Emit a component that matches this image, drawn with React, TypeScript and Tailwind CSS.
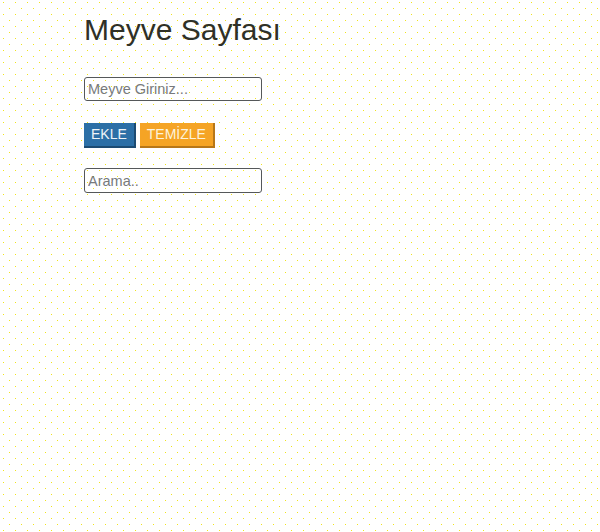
import { useState } from "react";

export default function App() {
  const [fruit, setFruit] = useState("");
  const [query, setQuery] = useState("");

  return (
    <div className="min-h-screen w-full bg-white bg-[radial-gradient(circle_at_3.5px_2.5px,#f2e41c_0.9px,transparent_0.9px),radial-gradient(circle_at_9.5px_8.5px,#f2e41c_0.9px,transparent_0.9px)] bg-[length:12px_12px] font-['Liberation_Sans',Arial,sans-serif]">
      <div className="pl-[84px] pt-[13px]">
        <h1 className="text-[30px] leading-[34px] font-normal text-[#2f3127]">
          Meyve Sayfası
        </h1>

        <input
          value={fruit}
          onChange={(e) => setFruit(e.target.value)}
          placeholder="Meyve Giriniz..."
          className="mt-[30px] block h-[24px] w-[178px] rounded-[3px] border border-[#55585a] bg-transparent px-[3px] text-[14.5px] text-[#333] placeholder:text-[#777a7d] outline-none"
        />

        <div className="mt-[22px] flex gap-[4px]">
          <button className="h-[25px] bg-[#2c6fa6] px-[7px] text-[14px] text-[#eef4f8] border-r-2 border-b-2 border-[#1c4b72]">
            EKLE
          </button>
          <button className="h-[25px] bg-[#f5a425] px-[7px] text-[14px] text-[#fdf3dc] border-r-2 border-b-2 border-[#b77718]">
            TEMİZLE
          </button>
        </div>

        <input
          value={query}
          onChange={(e) => setQuery(e.target.value)}
          placeholder="Arama.."
          className="mt-[20px] block h-[25px] w-[178px] rounded-[3px] border border-[#55585a] bg-transparent px-[3px] text-[14.5px] text-[#333] placeholder:text-[#777a7d] outline-none"
        />
      </div>
    </div>
  );
}
